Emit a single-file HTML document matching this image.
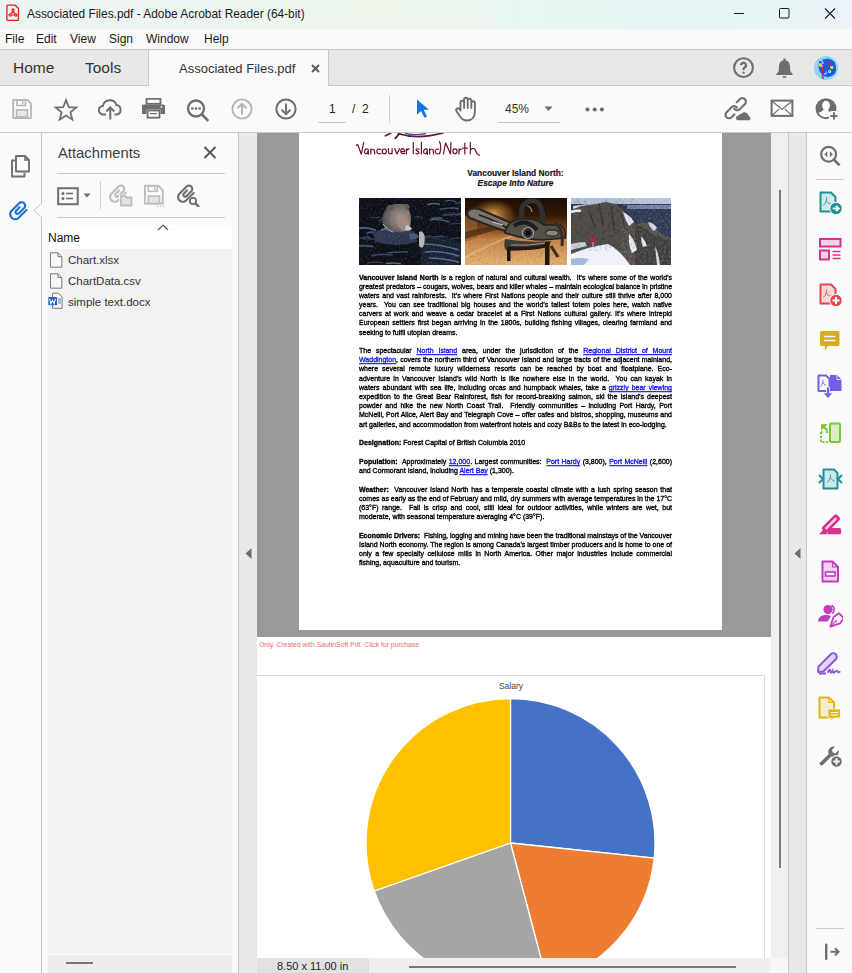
<!DOCTYPE html>
<html><head><meta charset="utf-8">
<style>
*{box-sizing:border-box;margin:0;padding:0}
html,body{width:852px;height:973px;overflow:hidden;background:#fafafa;font-family:"Liberation Sans",sans-serif;color:#222;position:relative}
.a{position:absolute}
#title{left:0;top:0;width:852px;height:29px;background:linear-gradient(90deg,#eaf5f3 0%,#ecf6f0 25%,#eff7ec 45%,#e9f6f1 62%,#e6f4f5 80%,#ebf4f8 100%)}
#menu{left:0;top:29px;width:852px;height:20px;background:#f9f9f9}
#menu span{position:absolute;top:2px;font-size:12px;color:#1a1a1a;line-height:16px}
#tabbar{left:0;top:49px;width:852px;height:37px;background:#e8e8e8;border-top:1px solid #c9c9c9;border-bottom:1px solid #c9c9c9}
#acttab{left:148px;top:49px;width:181px;height:38px;background:#fafafa;border-left:1px solid #c9c9c9;border-right:1px solid #c9c9c9;border-top:1px solid #c9c9c9}
#toolbar{left:0;top:86px;width:852px;height:47px;background:#fafafa;border-bottom:1px solid #c9c9c9}
#lstrip{left:0;top:133px;width:42px;height:840px;background:#fafafa;border-right:1px solid #c6c6c6}
#panel{left:42px;top:133px;width:197px;height:840px;background:#fafafa;border-right:1px solid #c6c6c6}
#lstrip2{left:239px;top:133px;width:18px;height:840px;background:#e9e9e9}
#doc{left:257px;top:133px;width:514px;height:826px;background:#fff;overflow:hidden}
#vscroll{left:771px;top:133px;width:18px;height:840px;background:#f0f0f0;border-right:1px solid #c6c6c6}
#rstrip{left:789px;top:133px;width:18px;height:840px;background:#e9e9e9;border-right:1px solid #c6c6c6}
#rpanel{left:807px;top:133px;width:45px;height:840px;background:#fafafa}
#status{left:257px;top:958px;width:514px;height:15px;background:#efefef}
.ico{position:absolute}
.ln{position:absolute;left:60px;width:313px;height:9px;font-size:7px;line-height:9px;color:#000;-webkit-text-stroke:0.32px #000;transform:scaleY(1.12);transform-origin:0 7px;text-align:justify;text-align-last:justify;white-space:nowrap}
.ln.last{text-align:left;text-align-last:left}
.ln u{color:#1515ee;-webkit-text-stroke-color:#1515ee;text-decoration:underline}
.ln b{font-weight:bold}
</style></head>
<body>
<div id="title" class="a">
<svg class="ico" style="left:6px;top:4px" width="14" height="17" viewBox="0 0 14 17"><path d="M1.7 1.2h7.5l3.3 3.4v10.9a0.8 0.8 0 0 1-0.8 0.8h-10a0.8 0.8 0 0 1-0.8-0.8v-13.5a0.8 0.8 0 0 1 0.8-0.8z" fill="none" stroke="#e3191e" stroke-width="1.3"/><g fill="none" stroke="#e3191e" stroke-width="1.1"><circle cx="7" cy="6" r="1.1"/><circle cx="4.1" cy="11" r="1.1"/><circle cx="9.9" cy="11" r="1.1"/><path d="M7 7.1l-2.1 3M7 7.1l2.1 3M5.2 11h3.6"/></g></svg>
<span class="a" style="left:27px;top:6px;font-size:11.9px;color:#1a1a1a;line-height:16px;white-space:nowrap">Associated Files.pdf - Adobe Acrobat Reader (64-bit)</span>
<svg class="ico" style="left:733px;top:12px" width="12" height="3"><rect x="1" y="1" width="10" height="1" fill="#1a1a1a"/></svg>
<svg class="ico" style="left:778px;top:8px" width="12" height="11"><rect x="1.5" y="0.5" width="9.5" height="9.5" rx="1" fill="none" stroke="#1a1a1a" stroke-width="1"/></svg>
<svg class="ico" style="left:824px;top:8px" width="12" height="11"><path d="M1 0.5l10 10M11 0.5l-10 10" stroke="#1a1a1a" stroke-width="1.1"/></svg>
</div>
<div id="menu" class="a">
<span style="left:5px">File</span><span style="left:36px">Edit</span><span style="left:70px">View</span><span style="left:109px">Sign</span><span style="left:146px">Window</span><span style="left:204px">Help</span>
</div>
<div id="tabbar" class="a">
<span class="a" style="left:13px;top:9px;font-size:15.5px;color:#333;line-height:18px">Home</span>
<span class="a" style="left:85px;top:9px;font-size:15.5px;color:#333;line-height:18px">Tools</span>
<svg class="ico" style="left:731px;top:5px" width="25" height="25" viewBox="731 54 25 25"><circle cx="743.5" cy="66.6" r="9.4" fill="none" stroke="#6e6e6e" stroke-width="2.1"/><path d="M741 64.3a2.5 2.5 0 1 1 3.6 2.2c-0.8 0.4-1.1 0.9-1.1 1.9v0.6" fill="none" stroke="#6e6e6e" stroke-width="2.3"/><circle cx="743.5" cy="71.6" r="1.2" fill="#6e6e6e"/></svg>
<svg class="ico" style="left:774px;top:5px" width="21" height="24" viewBox="774 54 21 24"><rect x="783.3" y="57.6" width="2.4" height="2" rx="0.5" fill="#6e6e6e"/><path d="M784.5 59.2c-3.5 0-5.4 2.6-5.5 6.2l-0.3 4.6l-2.4 3.3v0.6h16.4v-0.6l-2.4-3.3l-0.3-4.6c-0.1-3.6-2-6.2-5.5-6.2z" fill="#6e6e6e"/><path d="M782.3 75.2h4.4a2.2 1.8 0 0 1-4.4 0z" fill="#6e6e6e"/></svg>
<svg class="ico" style="left:813px;top:5px" width="26" height="26" viewBox="813 54 26 26"><circle cx="826" cy="67" r="12" fill="#8dd6fa"/>
<path d="M819 60.5l2-0.8l1.8 4l1-1.5l-1.5-3.5l5.5-1.2l4 1.2l3 2.5l1 4l0.4 4l-1.5 3.5l-3 2.2l-4 1l-3.5-0.6l-2.6-2l-2-3l-1-3.5z" fill="#1d58e6"/>
<path d="M818.8 62.5l2.5-0.5l1 3l-3.2 0.6z" fill="#f6df0c"/>
<path d="M820.5 66l2-0.5l1 5.5l-2.3 0.5z" fill="#f21c14"/>
<path d="M820.5 65.5l2-0.3l0.2 0.8l-2 0.3z" fill="#fff"/>
<path d="M821.5 74.5l1.3-0.5l1.3 3.6l-1.3 0.6z" fill="#f21c14"/>
<path d="M828.2 60l1.4 0l0.6 4l-2.2 0z" fill="#f21c14"/>
<path d="M830.3 65l3.2 0.2l-0.5 2.8l-2.6-0.2z" fill="#f6df0c"/>
<path d="M824 72.5a1.4 1.4 0 0 0 2.2-1.8" fill="none" stroke="#fff" stroke-width="0.9"/>
<circle cx="829.6" cy="70.5" r="1.5" fill="#fff"/><circle cx="829.4" cy="70.3" r="0.6" fill="#1d58e6"/>
</svg>
</div>
<div id="acttab" class="a">
<span class="a" style="left:30px;top:11px;font-size:13px;color:#333;line-height:16px;white-space:nowrap">Associated Files.pdf</span>
<svg class="ico" style="left:162px;top:14px" width="9" height="9"><path d="M1 1l7 7M8 1l-7 7" stroke="#555" stroke-width="1.8"/></svg>
</div>
<div id="toolbar" class="a">
<!-- save disabled -->
<svg class="ico" style="left:11px;top:12px" width="22" height="22" viewBox="0 0 22 22"><path d="M2.2 1.8h14.3l3.5 3.5v14.2a0.7 0.7 0 0 1-0.7 0.7h-16.4a0.7 0.7 0 0 1-0.7-0.7v-17z" fill="none" stroke="#b5b5b5" stroke-width="1.8"/><rect x="6" y="2" width="8.5" height="5.5" fill="none" stroke="#b5b5b5" stroke-width="1.6"/><rect x="11" y="3.2" width="1.5" height="3" fill="#b5b5b5"/><rect x="5.5" y="12" width="11" height="7" fill="#e6e6e6" stroke="#b5b5b5" stroke-width="1.6"/></svg>
<!-- star -->
<svg class="ico" style="left:53px;top:11px" width="26" height="25" viewBox="0 0 26 25"><g transform="translate(13 13) scale(0.92) translate(-13 -13)"><path d="M13 2.2l3 7.6l8.2 0.5l-6.4 5.2l2.1 8l-6.9-4.4l-6.9 4.4l2.1-8l-6.4-5.2l8.2-0.5z" fill="none" stroke="#6e6e6e" stroke-width="1.9" stroke-linejoin="miter"/></g></svg>
<!-- cloud upload -->
<svg class="ico" style="left:98px;top:11px" width="25" height="24" viewBox="0 0 25 24"><path d="M8 17.5h-2.5a4.3 4.3 0 0 1-0.6-8.6a7 7 0 0 1 13.5-0.8a4.8 4.8 0 0 1 0.6 9.4h-2.5" fill="none" stroke="#6e6e6e" stroke-width="2"/><path d="M12.3 22.5v-11.5M8.3 14.5l4-4l4 4" fill="none" stroke="#6e6e6e" stroke-width="2"/></svg>
<!-- printer -->
<svg class="ico" style="left:141px;top:12px" width="25" height="21" viewBox="0 0 25 21"><rect x="5.5" y="0.8" width="14" height="5" fill="none" stroke="#6e6e6e" stroke-width="1.8"/><path d="M2.5 6.5h20a1.5 1.5 0 0 1 1.5 1.5v8h-4.5v-4.5h-14v4.5h-4.5v-8a1.5 1.5 0 0 1 1.5-1.5z" fill="#6e6e6e"/><rect x="6.5" y="12.5" width="12" height="7.2" fill="none" stroke="#6e6e6e" stroke-width="1.8"/><rect x="9" y="15" width="7" height="1.2" fill="#6e6e6e"/><circle cx="20.5" cy="9" r="0.9" fill="#fafafa"/></svg>
<!-- search dots -->
<svg class="ico" style="left:186px;top:13px" width="25" height="23" viewBox="0 0 25 23"><circle cx="10" cy="9.5" r="8" fill="none" stroke="#6e6e6e" stroke-width="2.3"/><path d="M15.8 15.3l6.5 6.5" stroke="#6e6e6e" stroke-width="2.6"/><circle cx="6.4" cy="9.5" r="1.3" fill="#6e6e6e"/><circle cx="10" cy="9.5" r="1.3" fill="#6e6e6e"/><circle cx="13.6" cy="9.5" r="1.3" fill="#6e6e6e"/></svg>
<!-- up disabled -->
<svg class="ico" style="left:230px;top:12px" width="24" height="22" viewBox="0 0 24 22"><circle cx="12" cy="11" r="9.6" fill="none" stroke="#b5b5b5" stroke-width="1.9"/><path d="M12 16.5v-10.5M7.5 10.3l4.5-4.5l4.5 4.5" fill="none" stroke="#b5b5b5" stroke-width="2"/></svg>
<!-- down -->
<svg class="ico" style="left:274px;top:12px" width="24" height="22" viewBox="0 0 24 22"><circle cx="12" cy="11" r="9.6" fill="none" stroke="#6e6e6e" stroke-width="2"/><path d="M12 5.5v10.5M7.5 11.7l4.5 4.5l4.5-4.5" fill="none" stroke="#6e6e6e" stroke-width="2"/></svg>
<span class="a" style="left:329px;top:16.3px;font-size:12px;line-height:14px;color:#222">1</span>
<div class="a" style="left:318px;top:36px;width:28px;height:1px;background:#c4c4c4"></div>
<span class="a" style="left:352px;top:16.3px;font-size:12px;line-height:14px;color:#222">/&nbsp; 2</span>
<div class="a" style="left:389px;top:9px;width:1px;height:28px;background:#cdcdcd"></div>
<!-- arrow cursor -->
<svg class="ico" style="left:415px;top:12px" width="16" height="21" viewBox="0 0 16 21"><path d="M2 1.5l12 10.3h-5.3l3.3 6.6l-2.6 1.3l-3.3-6.8l-4.1 3.8z" fill="#1473e6"/></svg>
<!-- hand -->
<svg class="ico" style="left:453px;top:10px" width="27" height="26" viewBox="0 0 27 26"><path d="M7.5 14.5v-8a1.8 1.8 0 0 1 3.6 0v5.5v-8.5a1.8 1.8 0 0 1 3.6 0v8.5v-7.5a1.8 1.8 0 0 1 3.6 0v7.5v-5a1.8 1.8 0 0 1 3.6 0v8.5c0 5.5-3.2 9-8 9c-3.5 0-5.3-1.6-7-4.3l-3.3-5a1.7 1.7 0 0 1 2.6-2.2z" fill="none" stroke="#6e6e6e" stroke-width="1.9" stroke-linejoin="round"/></svg>
<span class="a" style="left:505px;top:16.2px;font-size:12px;line-height:14px;color:#333">45%</span>
<svg class="ico" style="left:544px;top:20px" width="10" height="6"><path d="M0.5 0.5h8l-4 4.5z" fill="#6e6e6e"/></svg>
<div class="a" style="left:498px;top:36px;width:62px;height:1px;background:#c4c4c4"></div>
<svg class="ico" style="left:585px;top:20.5px" width="20" height="5"><circle cx="2.5" cy="2.5" r="2.1" fill="#6e6e6e"/><circle cx="9.7" cy="2.5" r="2.1" fill="#6e6e6e"/><circle cx="16.9" cy="2.5" r="2.1" fill="#6e6e6e"/></svg>
<!-- link cloud -->
<svg class="ico" style="left:722px;top:8px" width="32" height="30" viewBox="722 94 32 30"><path d="M736.69 102.36 L736.90 102.15 L737.11 101.94 L737.33 101.73 L737.54 101.51 L737.75 101.30 L737.96 101.09 L738.17 100.88 L738.39 100.66 L738.60 100.45 L738.81 100.24 L739.02 100.03 L739.23 99.82 L739.45 99.60 L739.66 99.39 L739.87 99.18 L740.21 98.88 L740.60 98.62 L741.01 98.42 L741.44 98.27 L741.89 98.18 L742.35 98.15 L742.80 98.18 L743.25 98.27 L743.68 98.42 L744.10 98.62 L744.48 98.88 L744.82 99.18 L745.12 99.52 L745.38 99.90 L745.58 100.32 L745.73 100.75 L745.82 101.20 L745.85 101.65 L745.82 102.11 L745.73 102.56 L745.58 102.99 L745.38 103.40 L745.12 103.79 L744.82 104.13 L744.61 104.34 L744.40 104.55 L744.18 104.77 L743.97 104.98 L743.76 105.19 L743.55 105.40 L743.34 105.61 L743.12 105.83 L742.91 106.04 L742.70 106.25 L742.49 106.46 L742.27 106.67 L742.06 106.89 L741.85 107.10 L741.64 107.31 L741.43 107.52 L741.21 107.74 L741.00 107.95 L740.79 108.16 L740.58 108.37 L740.37 108.58 L740.15 108.80 L739.94 109.01 L739.73 109.22 L739.39 109.52 L739.00 109.78 L738.59 109.98 L738.16 110.13 L737.71 110.22 L737.25 110.25 L736.80 110.22 L736.35 110.13 L735.92 109.98 L735.50 109.78 L735.12 109.52 L734.78 109.22 L734.48 108.88 L734.22 108.50" fill="none" stroke="#6e6e6e" stroke-width="2.1" stroke-linecap="round"/><path d="M734.50 114.25 L734.29 114.46 L734.07 114.67 L733.86 114.89 L733.65 115.10 L733.44 115.31 L733.23 115.52 L733.01 115.74 L732.80 115.95 L732.59 116.16 L732.38 116.37 L732.17 116.58 L731.95 116.80 L731.74 117.01 L731.53 117.22 L731.19 117.52 L730.80 117.78 L730.39 117.98 L729.96 118.13 L729.51 118.22 L729.05 118.25 L728.60 118.22 L728.15 118.13 L727.72 117.98 L727.30 117.78 L726.92 117.52 L726.58 117.22 L726.28 116.88 L726.02 116.50 L725.82 116.08 L725.67 115.65 L725.58 115.20 L725.55 114.75 L725.58 114.29 L725.67 113.84 L725.82 113.41 L726.02 113.00 L726.28 112.61 L726.58 112.27 L726.58 112.27 L726.79 112.06 L727.00 111.85 L727.22 111.63 L727.43 111.42 L727.64 111.21 L727.85 111.00 L728.06 110.79 L728.28 110.57 L728.49 110.36 L728.70 110.15 L728.91 109.94 L729.13 109.73 L729.34 109.51 L729.55 109.30 L729.76 109.09 L729.97 108.88 L730.19 108.66 L730.40 108.45 L730.61 108.24 L730.82 108.03 L731.03 107.82 L731.25 107.60 L731.46 107.39 L731.67 107.18 L732.01 106.88 L732.40 106.62 L732.81 106.42 L733.24 106.27 L733.69 106.18 L734.15 106.15 L734.60 106.18 L735.05 106.27 L735.48 106.42 L735.90 106.62 L736.28 106.88 L736.62 107.18 L736.92 107.52" fill="none" stroke="#6e6e6e" stroke-width="2.1" stroke-linecap="round"/><path d="M736 121.2v-6h14.8v6z" fill="#fafafa"/><path d="M737.2 120.2a2.6 2.6 0 0 1 1.3-4.8a3 3 0 0 1 2.6-1.3a4.2 4.2 0 0 1 7.6 1.8a2.7 2.7 0 0 1 1 4.3z" fill="#6e6e6e"/></svg>
<!-- mail -->
<svg class="ico" style="left:770px;top:13px" width="24" height="19" viewBox="0 0 24 19"><rect x="1.6" y="1.6" width="20.8" height="15.3" fill="none" stroke="#6e6e6e" stroke-width="2"/><path d="M2 2.2l10 8l10-8M2 16.5l7.3-6.6M22 16.5l-7.3-6.6" fill="none" stroke="#6e6e6e" stroke-width="1.2"/></svg>
<!-- person add -->
<svg class="ico" style="left:812px;top:8px" width="30" height="30" viewBox="812 94 30 30"><defs><clipPath id="pin"><circle cx="826" cy="108.7" r="8.6"/></clipPath></defs><circle cx="826" cy="108.7" r="10.5" fill="#6e6e6e"/><g clip-path="url(#pin)" fill="#fafafa"><ellipse cx="826" cy="105.6" rx="3.9" ry="4.8"/><path d="M823.8 109.5h4.4l0.6 2.2c3 0.8 5.5 2.2 7 4.5l-2 8h-18l-1.5-8c1.6-2.3 4.1-3.7 7-4.5z"/></g><rect x="829" y="111" width="10" height="10" rx="3" fill="#fafafa"/><path d="M834 112.3v7.3M830.3 116h7.3" stroke="#6e6e6e" stroke-width="1.9"/></svg>
</div>
<div id="lstrip" class="a">
<svg class="ico" style="left:10px;top:21px" width="22" height="24" viewBox="0 0 22 24"><path d="M6 2h9l4 4v11.5h-13z" fill="none" stroke="#6e6e6e" stroke-width="1.9" stroke-linejoin="round"/><path d="M15 2v4h4" fill="none" stroke="#6e6e6e" stroke-width="1.6"/><path d="M5 6.5h-3v16h12.5v-4" fill="none" stroke="#6e6e6e" stroke-width="1.9" stroke-linejoin="round"/></svg>
<svg class="ico" style="left:6px;top:65px" width="26" height="26" viewBox="6 198 26 26"><path d="M19.52 207.32 L16.19 210.65 L15.93 210.98 L15.74 211.36 L15.65 211.78 L15.65 212.20 L15.74 212.62 L15.93 213.00 L16.19 213.33 L16.53 213.60 L16.91 213.78 L17.32 213.88 L17.75 213.88 L18.16 213.78 L18.55 213.60 L18.88 213.33 L24.08 208.14 L24.57 207.52 L24.91 206.82 L25.08 206.05 L25.08 205.27 L24.91 204.51 L24.57 203.80 L24.08 203.19 L23.46 202.70 L22.76 202.36 L21.99 202.18 L21.21 202.18 L20.45 202.36 L19.74 202.70 L19.13 203.19 L11.67 210.65 L10.97 211.52 L10.48 212.53 L10.23 213.62 L10.23 214.74 L10.48 215.83 L10.97 216.84 L11.67 217.72 L12.54 218.42 L13.55 218.90 L14.64 219.15 L15.76 219.15 L16.85 218.90 L17.86 218.42 L18.74 217.72 L26.59 209.87" fill="none" stroke="#1b6fd6" stroke-width="2.1" stroke-linecap="round" stroke-linejoin="round"/></svg>
</div>
<div class="a" style="left:33px;top:203px;width:10px;height:15px"><svg width="10" height="15"><path d="M9 0l-8 7.3l8 7.3" fill="#fafafa" stroke="#c6c6c6" stroke-width="1"/><rect x="9" y="0" width="1" height="15" fill="#fafafa"/></svg></div>
<div id="panel" class="a">
<span class="a" style="left:16px;top:11px;font-size:14.8px;line-height:18px;color:#3d3d3d;white-space:nowrap">Attachments</span>
<svg class="ico" style="left:161px;top:13px" width="14" height="13"><path d="M1.5 1l11 11M12.5 1l-11 11" stroke="#555" stroke-width="2"/></svg>
<div class="a" style="left:15px;top:40px;width:168px;height:1px;background:#c9c9c9"></div>
<svg class="ico" style="left:15px;top:54px" width="22" height="19" viewBox="0 0 22 19"><rect x="1.2" y="1.2" width="19.5" height="16" fill="none" stroke="#6e6e6e" stroke-width="2"/><circle cx="6" cy="6.5" r="1.5" fill="#6e6e6e"/><circle cx="6" cy="11.5" r="1.5" fill="#6e6e6e"/><rect x="9" y="5.7" width="7" height="1.6" fill="#6e6e6e"/><rect x="9" y="10.7" width="7" height="1.6" fill="#6e6e6e"/></svg>
<svg class="ico" style="left:41px;top:60px" width="8" height="5"><path d="M0.5 0.5h7l-3.5 4z" fill="#6e6e6e"/></svg>
<div class="a" style="left:58px;top:48px;width:1px;height:28px;background:#d0d0d0"></div>
<svg class="ico" style="left:65px;top:50px" width="26" height="24" viewBox="107 183 26 24"><path d="M118.97 190.48 L115.81 193.64 L115.56 193.96 L115.38 194.32 L115.29 194.71 L115.29 195.12 L115.38 195.51 L115.56 195.88 L115.81 196.19 L116.12 196.44 L116.49 196.62 L116.88 196.71 L117.29 196.71 L117.68 196.62 L118.04 196.44 L118.36 196.19 L123.30 191.26 L123.76 190.67 L124.09 190.00 L124.25 189.28 L124.25 188.53 L124.09 187.81 L123.76 187.13 L123.30 186.55 L122.72 186.09 L122.05 185.77 L121.32 185.60 L120.57 185.60 L119.85 185.77 L119.18 186.09 L118.60 186.55 L111.51 193.64 L110.85 194.47 L110.38 195.43 L110.15 196.47 L110.15 197.53 L110.38 198.57 L110.85 199.53 L111.51 200.36 L112.34 201.02 L113.30 201.48 L114.34 201.72 L115.40 201.72 L116.44 201.48 L117.39 201.02 L118.23 200.36 L125.68 192.90" fill="none" stroke="#bdbdbd" stroke-width="2.1" stroke-linecap="round" stroke-linejoin="round"/><rect x="119" y="194.5" width="14" height="12" fill="#fafafa"/><path d="M121 197.5v-1.8h4l1.2 1.8h5.3v8h-10.5z" fill="#e3e3e3" stroke="#bdbdbd" stroke-width="1.8" stroke-linejoin="round"/></svg>
<svg class="ico" style="left:100px;top:49px" width="26" height="26" viewBox="142 182 26 26"><path d="M145 185.8h13.3l4.5 4.5v13.2h-17.8z" fill="none" stroke="#bdbdbd" stroke-width="1.9"/><rect x="148.3" y="185.8" width="9" height="5.5" fill="none" stroke="#bdbdbd" stroke-width="1.6"/><rect x="154" y="187.3" width="1.6" height="2.6" fill="#bdbdbd"/><rect x="148.3" y="196" width="11.2" height="7.5" fill="#e3e3e3" stroke="#bdbdbd" stroke-width="1.6"/><circle cx="157.8" cy="206.3" r="0.8" fill="#bdbdbd"/><circle cx="160.8" cy="206.3" r="0.8" fill="#bdbdbd"/><circle cx="163.8" cy="206.3" r="0.8" fill="#bdbdbd"/></svg>
<svg class="ico" style="left:133px;top:50px" width="26" height="24" viewBox="175 183 26 24"><path d="M186.97 190.48 L183.81 193.64 L183.56 193.96 L183.38 194.32 L183.29 194.71 L183.29 195.12 L183.38 195.51 L183.56 195.88 L183.81 196.19 L184.12 196.44 L184.49 196.62 L184.88 196.71 L185.29 196.71 L185.68 196.62 L186.04 196.44 L186.36 196.19 L191.30 191.26 L191.76 190.67 L192.09 190.00 L192.25 189.28 L192.25 188.53 L192.09 187.81 L191.76 187.13 L191.30 186.55 L190.72 186.09 L190.05 185.77 L189.32 185.60 L188.57 185.60 L187.85 185.77 L187.18 186.09 L186.60 186.55 L179.51 193.64 L178.85 194.47 L178.38 195.43 L178.15 196.47 L178.15 197.53 L178.38 198.57 L178.85 199.53 L179.51 200.36 L180.34 201.02 L181.30 201.48 L182.34 201.72 L183.40 201.72 L184.44 201.48 L185.39 201.02 L186.23 200.36 L193.68 192.90" fill="none" stroke="#6e6e6e" stroke-width="2.1" stroke-linecap="round" stroke-linejoin="round"/><circle cx="193" cy="201" r="4.6" fill="#fafafa"/><circle cx="193" cy="201" r="3.2" fill="none" stroke="#6e6e6e" stroke-width="1.8"/><path d="M195.4 203.4l3 3" stroke="#6e6e6e" stroke-width="2.2" stroke-linecap="round"/></svg>
<div class="a" style="left:15px;top:84px;width:168px;height:1px;background:#c9c9c9"></div>
<div class="a" style="left:6px;top:92px;width:184px;height:24px;background:#fff"></div>
<svg class="ico" style="left:115px;top:91px" width="12" height="7"><path d="M1 6l5-5l5 5" fill="none" stroke="#555" stroke-width="1.2"/></svg>
<span class="a" style="left:6px;top:97.5px;font-size:12px;line-height:14px;color:#111">Name</span>
<div class="a" style="left:6px;top:116px;width:184px;height:724px;background:#f2f2f2"></div>
<div class="a" style="left:190px;top:92px;width:6px;height:748px;background:#fafafa"></div>
<div class="a" style="left:6px;top:116px;width:14px;height:41px;background:#f6f6f6"></div>
<svg class="ico" style="left:7px;top:119px" width="14" height="16" viewBox="0 0 14 16"><path d="M1.5 0.8h7.5l3.8 3.8v10.6h-11.3z" fill="#f7f7f7" stroke="#7a7a7a" stroke-width="1"/><path d="M9 0.8v3.8h3.8" fill="none" stroke="#7a7a7a" stroke-width="1"/></svg>
<span class="a" style="left:26px;top:120px;font-size:11.5px;line-height:14px;color:#333">Chart.xlsx</span>
<svg class="ico" style="left:7px;top:140px" width="14" height="16" viewBox="0 0 14 16"><path d="M1.5 0.8h7.5l3.8 3.8v10.6h-11.3z" fill="#f7f7f7" stroke="#7a7a7a" stroke-width="1"/><path d="M9 0.8v3.8h3.8" fill="none" stroke="#7a7a7a" stroke-width="1"/></svg>
<span class="a" style="left:26px;top:141px;font-size:11.5px;line-height:14px;color:#333">ChartData.csv</span>
<svg class="ico" style="left:6px;top:159px" width="17" height="18" viewBox="0 0 17 18"><path d="M4.5 1.2h5.8l3.8 3.8v11.3h-9.6z" fill="#f7f7f7" stroke="#7a7a7a" stroke-width="1"/><rect x="10.2" y="6.5" width="2.6" height="1" fill="#2b7cd3"/><rect x="10.2" y="8.5" width="2.6" height="1" fill="#2b7cd3"/><rect x="10.2" y="10.5" width="2.6" height="1" fill="#2b7cd3"/><rect x="0.3" y="5" width="8.8" height="8.3" rx="0.8" fill="#2065c7"/><path d="M1.6 6.8l1.3 4.8l1.6-3.6l1.6 3.6l1.3-4.8" fill="none" stroke="#fff" stroke-width="1.1"/></svg>
<span class="a" style="left:26px;top:162px;font-size:11.5px;line-height:14px;color:#333">simple text.docx</span>
<div class="a" style="left:6px;top:821px;width:184px;height:19px;background:#ededed;border-top:1px solid #fafafa"></div>
<div class="a" style="left:24px;top:829px;width:27px;height:2px;background:#777"></div>
</div>
<div id="lstrip2" class="a"><svg class="ico" style="left:6px;top:415px" width="7" height="11"><path d="M6.5 0v11l-6-5.5z" fill="#6e6e6e"/></svg></div>
<div id="doc" class="a">
  <div class="a" style="left:0;top:0;width:514px;height:504px;background:#999"></div>
  <div id="pg" class="a" style="left:42px;top:0;width:423px;height:497px;background:#fff;overflow:hidden">
<svg class="a" style="left:50px;top:0px" width="140" height="30" viewBox="349 133 140 30">
<g fill="none" stroke="#6a1626" stroke-width="1.2" stroke-linecap="round" stroke-linejoin="round">
<path d="M385.5 135.8L390.5 133.3" stroke-width="1.7"/><path d="M395.5 138.2L399.5 133.5" stroke-width="1.9"/><path d="M398.5 133.8Q418 139.8 443 133" stroke-width="1.7"/>
<path d="M356.5 145.5q0.8-1.5 1.5-0.3l3.3 9l2.4-11.5"/>
<path d="M368.3 149.3q-3-1.3-3.8 2q-0.2 3 2.6 2.2l1.2-3.2v4"/>
<path d="M370.8 148.8v5.2M370.8 150.5q2-2.2 3.6-0.5l0.3 4"/>
<path d="M380.8 149.4q-3.8-1.3-4 2q0 3 4 2.2"/>
<ellipse cx="384.3" cy="151.4" rx="2.1" ry="2.4"/>
<path d="M388.5 148.6v3.6q0.8 2.4 3.6 0.9v-4.6v5.2"/>
<path d="M394.6 148.5l2.4 5.5l2.6-5.5"/>
<path d="M401 151.6h3.6q0-3-2-3q-2 0-1.8 3q0.2 2.5 3.8 1.8"/>
<path d="M406.4 148.8v5.2M406.4 151q1-2.4 3-2"/>
<path d="M413.3 142.5v11.3"/>
<path d="M419 149.2q-3-1.2-3 0.9q3 1.3 3 3q-1 1.2-3.2 0.2"/>
<path d="M421.4 142v12"/>
<path d="M427.4 149.3q-3-1.3-3.8 2q-0.2 3 2.6 2.2l1.2-3.2v4"/>
<path d="M429.6 148.8v5.2M429.6 150.5q2-2.2 3.6-0.5l0.3 4"/>
<path d="M438.8 149.3q-3-1-3.6 2q0 3 3 2.3M439.5 141.5q2.5 6 0 12.5"/>
<path d="M443.5 154q1-6 2.2-11l4.8 11q0.4-6 0.4-11.3"/>
<ellipse cx="455" cy="151.3" rx="2.1" ry="2.4"/>
<path d="M459 148.8v5.2M459 151q1-2.2 3-2"/>
<path d="M464.8 143v11M462.8 148.2h4.6"/>
<path d="M470.3 142.3v11.7M470.3 150q3-3 5-0.3q1 3 1.8 4l2.2 1.6"/>
</g>
<path d="M405 133.4Q415 135.6 426 133.6" fill="none" stroke="#2a4a9a" stroke-width="1.3"/>
</svg>
  <div class="a" style="left:60px;top:34.5px;width:313px;text-align:center;font-size:8.4px;line-height:10.8px;font-weight:bold;color:#111;-webkit-text-stroke:0.15px #111">Vancouver Island North:<br><i>Escape Into Nature</i></div>
<svg class="a" style="left:60px;top:65px" width="102" height="67" viewBox="0 0 102 67">
<defs><filter id="bl1" x="-10%" y="-10%" width="120%" height="120%"><feGaussianBlur stdDeviation="0.6"/></filter>
<radialGradient id="bear" cx="0.65" cy="0.5" r="0.7"><stop offset="0" stop-color="#a89488"/><stop offset="0.45" stop-color="#7e7670"/><stop offset="1" stop-color="#3e4048"/></radialGradient>
<clipPath id="c1"><rect width="102" height="67"/></clipPath></defs>
<rect width="102" height="67" fill="#0e1018"/>
<g filter="url(#bl1)" clip-path="url(#c1)">
<path d="M20.0 36.5q6.6 -2.3 13.2 -0.8" stroke="#2a3450" stroke-width="0.8" fill="none"/>
<path d="M82.9 17.4q5.6 -2.1 11.3 0.6" stroke="#2a3450" stroke-width="1.2" fill="none"/>
<path d="M85.4 15.5q5.1 -2.5 10.1 1.0" stroke="#2a3450" stroke-width="0.9" fill="none"/>
<path d="M74.6 39.6q6.1 -2.6 12.2 -0.2" stroke="#34405e" stroke-width="1.4" fill="none"/>
<path d="M91.6 26.0q9.5 -1.8 19.0 1.4" stroke="#2a3450" stroke-width="1.2" fill="none"/>
<path d="M93.2 58.9q4.7 -2.0 9.4 -0.2" stroke="#44527a" stroke-width="1.5" fill="none"/>
<path d="M76.8 57.3q6.9 -2.1 13.9 0.6" stroke="#2a3450" stroke-width="1.2" fill="none"/>
<path d="M19.4 22.6q10.4 -2.7 20.8 2.0" stroke="#34405e" stroke-width="1.5" fill="none"/>
<path d="M12.1 57.7q10.8 -2.4 21.5 -0.4" stroke="#34405e" stroke-width="1.6" fill="none"/>
<path d="M55.2 19.1q4.4 -1.2 8.9 1.4" stroke="#2a3450" stroke-width="1.2" fill="none"/>
<path d="M10.8 19.7q9.4 -1.1 18.8 0.8" stroke="#34405e" stroke-width="0.8" fill="none"/>
<path d="M70.4 22.2q10.2 -2.0 20.3 2.0" stroke="#56668e" stroke-width="1.1" fill="none"/>
<path d="M3.1 40.2q4.2 -2.9 8.4 -0.1" stroke="#44527a" stroke-width="1.1" fill="none"/>
<path d="M67.4 65.7q6.4 -2.9 12.8 1.7" stroke="#56668e" stroke-width="1.2" fill="none"/>
<path d="M62.6 39.9q7.9 -1.9 15.8 1.2" stroke="#56668e" stroke-width="1.0" fill="none"/>
<path d="M26.6 65.5q7.6 -1.0 15.3 0.2" stroke="#56668e" stroke-width="1.4" fill="none"/>
<path d="M-2.9 41.3q8.4 -2.3 16.9 -0.0" stroke="#34405e" stroke-width="1.2" fill="none"/>
<path d="M91.3 40.8q6.0 -1.0 11.9 -0.8" stroke="#2a3450" stroke-width="1.5" fill="none"/>
<path d="M96.1 16.8q7.2 -1.4 14.4 -0.4" stroke="#56668e" stroke-width="1.6" fill="none"/>
<path d="M83.6 17.7q9.5 -2.5 19.0 -0.9" stroke="#34405e" stroke-width="1.4" fill="none"/>
<path d="M72.2 20.8q5.6 -1.5 11.1 -0.4" stroke="#56668e" stroke-width="1.2" fill="none"/>
<path d="M68.3 6.8q6.3 -2.3 12.5 -0.3" stroke="#56668e" stroke-width="1.6" fill="none"/>
<path d="M95.9 5.4q9.2 -2.8 18.4 0.4" stroke="#44527a" stroke-width="1.0" fill="none"/>
<path d="M7.7 35.5q5.3 -2.7 10.7 0.0" stroke="#44527a" stroke-width="1.6" fill="none"/>
<path d="M4.0 41.5q8.1 -1.6 16.3 1.4" stroke="#2a3450" stroke-width="1.1" fill="none"/>
<path d="M91.7 10.5q4.0 -2.1 8.1 2.0" stroke="#2a3450" stroke-width="1.5" fill="none"/>
<path d="M-1.6 30.6q9.3 -2.1 18.5 1.7" stroke="#56668e" stroke-width="1.7" fill="none"/>
<path d="M85.1 65.1q4.8 -1.1 9.7 1.7" stroke="#44527a" stroke-width="1.5" fill="none"/>
<path d="M92.0 60.1q10.3 -1.0 20.6 1.2" stroke="#34405e" stroke-width="1.0" fill="none"/>
<path d="M26.5 44.4q7.7 -1.1 15.3 1.7" stroke="#2a3450" stroke-width="0.9" fill="none"/>
<path d="M8.2 65.1q7.8 -1.7 15.6 -0.4" stroke="#34405e" stroke-width="1.3" fill="none"/>
<path d="M80.8 11.5q9.5 -2.6 19.1 -1.0" stroke="#44527a" stroke-width="1.4" fill="none"/>
<path d="M85.6 3.3q5.9 -2.2 11.8 0.6" stroke="#56668e" stroke-width="0.9" fill="none"/>
<path d="M28.9 54.9q10.0 -1.1 20.0 -0.9" stroke="#44527a" stroke-width="1.3" fill="none"/>
<path d="M-1.5 47.8q7.6 -1.6 15.2 -0.1" stroke="#2a3450" stroke-width="1.2" fill="none"/>
<path d="M62.9 39.3q6.5 -3.0 13.1 0.3" stroke="#44527a" stroke-width="0.9" fill="none"/>
<path d="M-4.6 48.4q9.6 -1.1 19.1 0.4" stroke="#44527a" stroke-width="1.5" fill="none"/>
<path d="M62 40q20-4 40 4v23h-40z" fill="#1c2438" opacity="0.8"/>
<path d="M64 46q16 0 36 6M66 54q14-2 34 4M70 60q12 0 30 4" stroke="#5a6a94" stroke-width="1.4" fill="none"/>
<path d="M14 34q20-8 42 0l2 10q-20 6-42 0z" fill="#2e3850"/>
<path d="M22 32q10-4 18-2" stroke="#6a7aa0" stroke-width="1.5" fill="none"/>
<path d="M23 24q0-15 13-18l10 0q6 6 6 16q0 10-8 12q-16 2-21-10z" fill="url(#bear)"/>
<path d="M27 11q1-5 6-4l1 5zM46 6q4-1 5 4l-4 2z" fill="#5e524c"/>
<path d="M41 16q7 2 10 9q0 7-6 8q-6-2-7-10z" fill="#a08a80"/>
<path d="M47 27q5 1 6 4q-3 3-7 1z" fill="#cfc6c0"/>
<path d="M24 26q4 6 10 8" stroke="#a8a4a4" stroke-width="1.2" fill="none"/>
<path d="M60 34q3-2 5 2q2 6-1 13q-3 2-4-2z" fill="#bcb4ae"/>
<path d="M50 36q7-2 10 2q-2 4-9 3z" fill="#4c5a7a"/>
</g><filter id="nz1"><feTurbulence type="fractalNoise" baseFrequency="0.5" numOctaves="2" seed="11"/><feColorMatrix type="matrix" values="0 0 0 0 0.45  0 0 0 0 0.52  0 0 0 0 0.7  0 0 0 -3 1.5"/></filter>
<rect width="102" height="67" filter="url(#nz1)" opacity="0.18"/></svg>
<svg class="a" style="left:166px;top:65px" width="102" height="67" viewBox="0 0 102 67">
<defs><filter id="bl2" x="-10%" y="-10%" width="120%" height="120%"><feGaussianBlur stdDeviation="0.5"/></filter>
<linearGradient id="tg" x1="0" y1="0" x2="0" y2="1"><stop offset="0" stop-color="#1a0c04"/><stop offset="0.25" stop-color="#2e1606"/><stop offset="0.45" stop-color="#7a4416"/><stop offset="0.62" stop-color="#c8864a"/><stop offset="1" stop-color="#e4b27a"/></linearGradient>
<radialGradient id="glow" cx="0.28" cy="0.24" r="0.22"><stop offset="0" stop-color="#e8a850" stop-opacity="0.95"/><stop offset="1" stop-color="#d89040" stop-opacity="0"/></radialGradient>
<clipPath id="c2"><rect width="102" height="67"/></clipPath>
<filter id="nz2"><feTurbulence type="fractalNoise" baseFrequency="0.45" numOctaves="2" seed="5"/><feColorMatrix type="matrix" values="0 0 0 0 0.1  0 0 0 0 0.05  0 0 0 0 0  0 0 0 -2.5 1.3"/></filter></defs>
<rect width="102" height="67" fill="url(#tg)"/>
<rect width="102" height="67" fill="url(#glow)"/>
<g filter="url(#bl2)" clip-path="url(#c2)">
<path d="M0 18h12v22l-12 4z" fill="#9a6030" opacity="0.7"/>
<path d="M0 34l34-8v5l-34 10z" fill="#3a200c" opacity="0.6"/>
<path d="M0 60q30-18 66-28" stroke="#f0c890" stroke-width="2" fill="none" opacity="0.55"/>
<path d="M3 13q4-4 11-2l30 13q6 4 4 8l-4 2q-12-3-39-14q-4-2-2-7z" fill="#7c7672" stroke="#2a2626" stroke-width="2.2"/>
<path d="M14 17q16 5 28 13" stroke="#1e1e1e" stroke-width="1.6" fill="none"/>
<path d="M28 24l10 3" stroke="#e0d8d0" stroke-width="1.3"/>
<path d="M58 25q-5-19 7-22q10-2 12 11q2 8 0 16" stroke="#2e3036" stroke-width="5" fill="none"/>
<path d="M62 8q4 0 5 6" stroke="#9a9490" stroke-width="1.2" fill="none"/>
<path d="M40 35q2-12 15-14q15-2 24 6l16 0q7 4 5 13l-22 2q-15 0-38-7z" fill="#55514c" stroke="#222" stroke-width="1.6"/>
<path d="M49 28q12-9 23 4" stroke="#1c1c22" stroke-width="4" fill="none"/>
<circle cx="63" cy="35" r="5.5" fill="#2e2e34" stroke="#b0aaa4" stroke-width="1.2"/><circle cx="63" cy="35" r="2.4" fill="#0a0a0a"/>
<ellipse cx="87" cy="35" rx="6.5" ry="3.2" fill="#8e8884" stroke="#222" stroke-width="1.2"/>
<path d="M40 41q22 4 46 2l-2 6q-22 4-42 4q-4-2-2-12z" fill="#3c3a38"/>
<path d="M44 50q22 2 40-3" stroke="#2a1810" stroke-width="3" fill="none"/>
<path d="M46 47q18 1 34-2" stroke="#a8a09a" stroke-width="1" fill="none"/>
<rect x="80" y="44" width="4.5" height="23" fill="#1c140e"/>
<rect x="42" y="49" width="3.5" height="14" fill="#1c140e"/>
<path d="M90 24q9 8 7 24M86 48l7 11" stroke="#3a2a20" stroke-width="3" fill="none"/>
</g>
<rect width="102" height="67" filter="url(#nz2)" opacity="0.25"/>
</svg>
<svg class="a" style="left:272px;top:65px" width="100" height="67" viewBox="0 0 100 67">
<defs><filter id="bl3" x="-10%" y="-10%" width="120%" height="120%"><feGaussianBlur stdDeviation="0.5"/></filter><clipPath id="c3"><rect width="100" height="67"/></clipPath>
<filter id="nz3"><feTurbulence type="fractalNoise" baseFrequency="0.45" numOctaves="2" seed="7"/><feColorMatrix type="matrix" values="0 0 0 0 1  0 0 0 0 1  0 0 0 0 1  0 0 0 -2.2 1.25"/></filter>
<filter id="nz3b"><feTurbulence type="fractalNoise" baseFrequency="0.35" numOctaves="2" seed="3"/><feColorMatrix type="matrix" values="0 0 0 0 0  0 0 0 0 0  0 0 0 0 0  0 0 0 -2.5 1.3"/></filter></defs>
<rect width="100" height="67" fill="#b6c2da"/>
<g clip-path="url(#c3)">
<g filter="url(#bl3)">
<path d="M0 6h100v61h-100z" fill="#2e3852"/>
<path d="M56 7h44v4h-44z" fill="#7080a0"/>
<path d="M2 8q10-2 24-2v5q-12 2-24 2z" fill="#d8e0ee"/>
<path d="M0 12l10-4l15-2l10-2l10 2l7 6l6 8l7 6l8-2l9 4l8 8l10 4v37h-100z" fill="#54504c"/>
<path d="M64 26q10 2 16 10l20 6v25h-36z" fill="#3e3c3c"/>
<path d="M28 6l4 22M40 8l3 24M18 12l6 18M50 14l4 16" stroke="#3e3a38" stroke-width="1.6" fill="none"/>
<path d="M0 14q6-2 10-1" stroke="#e8eef8" stroke-width="2.5" fill="none"/>
<path d="M52 14q8 4 11 10l-5 4q-4-6-6-14z" fill="#dfe6f2"/>
<path d="M77 24q6 1 9 6l-3 3q-4-3-6-9z" fill="#cdd6e6"/>
<path d="M58 36q6 6 8 16l-5 3q-4-8-3-19z" fill="#e8eef6"/>
<path d="M70 38q4 4 6 10l-4 1q-2-5-2-11z" fill="#dde4ee"/>
<path d="M84 48q4 8 5 19h-3q-1-10-2-19z" fill="#d0d8e6"/>
<path d="M0 46q8-2 14-2l2 4q-8 2-16 4z" fill="#c8d2e2"/>
<path d="M0 56q20-8 37-10q12 6 22 21h-59z" fill="#eef3fb"/>
<path d="M0 61q10-2 18 0l-5 6h-13z" fill="#a8b8d8"/>
<rect x="19" y="39" width="5" height="6" rx="2" fill="#cc1e3a"/>
<rect x="21" y="44" width="2" height="5" fill="#8a8890"/>
</g>
<rect x="55" y="6" width="45" height="61" filter="url(#nz3)" opacity="0.2"/>
<rect x="0" y="6" width="60" height="42" filter="url(#nz3b)" opacity="0.25"/>
</g></svg>
  <div class="ln" style="top:139.5px"><b>Vancouver Island North</b> is a region of natural and cultural wealth.&nbsp; It’s where some of the world’s</div>
<div class="ln" style="top:148.5px;letter-spacing:-0.035px">greatest predators – cougars, wolves, bears and killer whales – maintain ecological balance in pristine</div>
<div class="ln" style="top:157.7px">waters and vast rainforests.&nbsp; It’s where First Nations people and their culture still thrive after 8,000</div>
<div class="ln" style="top:166.9px">years.&nbsp; You can see traditional big houses and the world’s tallest totem poles here, watch native</div>
<div class="ln" style="top:176.1px">carvers at work and weave a cedar bracelet at a First Nations cultural gallery. It’s where intrepid</div>
<div class="ln" style="top:185.3px">European settlers first began arriving in the 1800s, building fishing villages, clearing farmland and</div>
<div class="ln last" style="top:194.5px">seeking to fulfil utopian dreams.</div>
<div class="ln" style="top:213.0px">The spectacular <u>North Island</u> area, under the jurisdiction of the <u>Regional District of Mount</u></div>
<div class="ln" style="top:222.2px"><u>Waddington</u>, covers the northern third of Vancouver Island and large tracts of the adjacent mainland,</div>
<div class="ln" style="top:231.4px">where several remote luxury wilderness resorts can be reached by boat and floatplane. Eco-</div>
<div class="ln" style="top:240.6px">adventure in Vancouver Island’s wild North is like nowhere else in the world.&nbsp; You can kayak in</div>
<div class="ln" style="top:249.8px">waters abundant with sea life, including orcas and humpback whales, take a <u>grizzly bear viewing</u></div>
<div class="ln" style="top:259.0px">expedition to the Great Bear Rainforest, fish for record-breaking salmon, ski the Island’s deepest</div>
<div class="ln" style="top:268.2px">powder and hike the new North Coast Trail.&nbsp; Friendly communities – including Port Hardy, Port</div>
<div class="ln" style="top:277.4px">McNeill, Port Alice, Alert Bay and Telegraph Cove – offer cafes and bistros, shopping, museums and</div>
<div class="ln last" style="top:286.6px">art galleries, and accommodation from waterfront hotels and cozy B&amp;Bs to the latest in eco-lodging.</div>
<div class="ln last" style="top:305.1px"><b>Designation:</b> Forest Capital of British Columbia 2010</div>
<div class="ln" style="top:323.9px"><b>Population:</b>&nbsp; Approximately <u>12,000</u>. Largest communities:&nbsp; <u>Port Hardy</u> (3,800), <u>Port McNeill</u> (2,600)</div>
<div class="ln last" style="top:333.1px">and Cormorant Island, including <u>Alert Bay</u> (1,300).</div>
<div class="ln" style="top:352.0px"><b>Weather:</b>&nbsp; Vancouver Island North has a temperate coastal climate with a lush spring season that</div>
<div class="ln" style="top:361.2px;letter-spacing:-0.017px">comes as early as the end of February and mild, dry summers with average temperatures in the 17°C</div>
<div class="ln" style="top:370.2px">(63°F) range.&nbsp; Fall is crisp and cool, still ideal for outdoor activities, while winters are wet, but</div>
<div class="ln last" style="top:379.2px">moderate, with seasonal temperature averaging 4°C (39°F).</div>
<div class="ln" style="top:397.9px;letter-spacing:-0.054px"><b>Economic Drivers:</b>&nbsp; Fishing, logging and mining have been the traditional mainstays of the Vancouver</div>
<div class="ln" style="top:407.1px;letter-spacing:-0.013px">Island North economy. The region is among Canada’s largest timber producers and is home to one of</div>
<div class="ln" style="top:416.1px">only a few specialty cellulose mills in North America. Other major industries include commercial</div>
<div class="ln last" style="top:425.1px">fishing, aquaculture and tourism.</div>
  </div>
  <div class="a" style="left:2px;top:507.5px;font-size:6.85px;line-height:8px;color:#f06a6a;white-space:nowrap">Only. Created with SautinSoft.Pdf. Click for purchase.</div>
<div class="a" style="left:0;top:542px;width:508px;height:300px;border-top:1px solid #d9d9d9;border-right:1px solid #d9d9d9"></div>
<div class="a" style="left:0;top:548px;width:508px;text-align:center;font-size:8.5px;line-height:11px;color:#444">Salary</div>
<svg class="a" style="left:0;top:0" width="514" height="826" viewBox="257 133 514 826">
<path d="M510.5 843L510.50 698.50A144.5 144.5 0 0 1 654.21 858.10Z" fill="#4472c4" stroke="#fff" stroke-width="1.3"/>
<path d="M510.5 843L654.21 858.10A144.5 144.5 0 0 1 547.41 982.71Z" fill="#ed7d31" stroke="#fff" stroke-width="1.3"/>
<path d="M510.5 843L547.41 982.71A144.5 144.5 0 0 1 374.20 891.00Z" fill="#a5a5a5" stroke="#fff" stroke-width="1.3"/>
<path d="M510.5 843L374.20 891.00A144.5 144.5 0 0 1 510.50 698.50Z" fill="#ffc000" stroke="#fff" stroke-width="1.3"/>
</svg>
</div>
<div id="vscroll" class="a"><div class="a" style="left:8px;top:57px;width:2px;height:678px;background:#787878"></div><div class="a" style="left:0;top:825px;width:17px;height:15px;background:#f7f7f7"></div></div>
<div id="rstrip" class="a"><svg class="ico" style="left:5px;top:415px" width="7" height="11"><path d="M6.5 0v11l-6-5.5z" fill="#6e6e6e"/></svg></div>
<div id="rpanel" class="a">
<svg class="ico" style="left:12px;top:12px" width="24" height="24" viewBox="0 0 24 24"><circle cx="9.6" cy="9.3" r="7.4" fill="none" stroke="#6e6e6e" stroke-width="2.2"/><path d="M14.8 14.5l5.8 5.8" stroke="#6e6e6e" stroke-width="2.6"/><path d="M8.3 6.3v6l-3-3z M10.9 6.3v6l3-3z" fill="#6e6e6e"/></svg>
<div class="a" style="left:9px;top:46px;width:28px;height:1px;background:#c9c9c9"></div>
<svg class="ico" style="left:12px;top:58px" width="24" height="25" viewBox="0 0 24 25"><path d="M1.5 1.5h10.5l4.5 4.5v14.5h-15z" fill="#d2e7ea" stroke="#1e9299" stroke-width="2" stroke-linejoin="round"/><path d="M7.5 6.5c0.5 2-0.5 5-3 8M7.5 9.5c0.5 1.5 2 3 4 3.5" fill="none" stroke="#1e9299" stroke-width="0.9"/><circle cx="17" cy="17.5" r="6.2" fill="#1e9299" stroke="#fafafa" stroke-width="1"/><path d="M13.8 17.5h5.5M17 14.8l2.8 2.7l-2.8 2.7" fill="none" stroke="#fff" stroke-width="1.8"/></svg>
<svg class="ico" style="left:11px;top:104px" width="24" height="24" viewBox="0 0 24 24"><rect x="2" y="2" width="20.5" height="7.5" fill="#f2d3e6" stroke="#d6338c" stroke-width="2"/><rect x="2" y="13.5" width="9" height="9" fill="#f2d3e6" stroke="#d6338c" stroke-width="2"/><path d="M14.5 14.5h8M14.5 18h8M14.5 21.5h8" stroke="#d6338c" stroke-width="1.3"/></svg>
<svg class="ico" style="left:12px;top:150px" width="24" height="25" viewBox="0 0 24 25"><path d="M1.5 1.5h10.5l4.5 4.5v14.5h-15z" fill="#f6d9dc" stroke="#e34850" stroke-width="2" stroke-linejoin="round"/><path d="M7.5 6.5c0.5 2-0.5 5-3 8M7.5 9.5c0.5 1.5 2 3 4 3.5" fill="none" stroke="#e34850" stroke-width="0.9"/><circle cx="17" cy="17.5" r="6.2" fill="#e34850" stroke="#fafafa" stroke-width="1"/><path d="M17 14v7M13.5 17.5h7" stroke="#fff" stroke-width="2"/></svg>
<svg class="ico" style="left:12px;top:197px" width="22" height="23" viewBox="0 0 22 23"><path d="M2.5 1h16.5a1.5 1.5 0 0 1 1.5 1.5v12a1.5 1.5 0 0 1-1.5 1.5h-10l-3.2 4.5v-4.5h-3.3a1.5 1.5 0 0 1-1.5-1.5v-12a1.5 1.5 0 0 1 1.5-1.5z" fill="#d5ad1e"/><path d="M5 6.5h11.5M5 10.5h11.5" stroke="#fafafa" stroke-width="1.6"/></svg>
<svg class="ico" style="left:10px;top:241px" width="26" height="26" viewBox="0 0 26 26"><path d="M1.5 1.5h7.5l3.5 3.5v12h-11z" fill="#fafafa" stroke="#6b62e8" stroke-width="2" stroke-linejoin="round"/><path d="M6 6c0.4 1.7-0.4 4-2.3 6.5M6 8.5c0.4 1.2 1.6 2.4 3.2 2.8" fill="none" stroke="#6b62e8" stroke-width="0.9"/><path d="M13 1h7l4.5 4.5v11.5h-11.5z" fill="#6b62e8"/><path d="M20 1v4.5h4.5" fill="none" stroke="#fafafa" stroke-width="0.8"/><path d="M9.5 13v6h-3.5l5 5.5l5-5.5h-3.5v-6z" fill="#6b62e8" stroke="#fafafa" stroke-width="0.8"/></svg>
<svg class="ico" style="left:12px;top:289px" width="24" height="22" viewBox="0 0 24 22"><rect x="11" y="1.5" width="10" height="18.5" rx="1" fill="#d9ecc8" stroke="#76c83e" stroke-width="2"/><path d="M2 10v10h7M2 10h1.5M7 10h2" fill="none" stroke="#76c83e" stroke-width="2" stroke-dasharray="2.2 1.6"/><path d="M8.5 2l-6.5 0.2l0.2 6.5z" fill="#76c83e"/><path d="M3.5 3.5l5 5" stroke="#76c83e" stroke-width="2"/></svg>
<svg class="ico" style="left:11px;top:335px" width="25" height="22" viewBox="0 0 25 22"><path d="M5.5 1.5h10.5l3.5 3.5v15.5h-14z" fill="#d2e7ea" stroke="#1e9299" stroke-width="2" stroke-linejoin="round"/><path d="M12.5 6.5c0.5 2-0.5 5-3 8M12.5 9.5c0.5 1.5 2 3 4 3.5" fill="none" stroke="#1e9299" stroke-width="0.9"/><path d="M1 7l4 4l-4 4M24 7l-4 4l4 4" fill="none" stroke="#1e9299" stroke-width="2"/></svg>
<svg class="ico" style="left:11px;top:380px" width="24" height="24" viewBox="818 513 24 24"><path d="M819 534.2l5.5-6l3 3l-1 3z" fill="#d6338c"/><path d="M827.5 528h12.3a1.2 1.2 0 0 1 1.2 1.2v3.8a1.2 1.2 0 0 1-1.2 1.2h-12.3z" fill="#d6338c"/><g transform="rotate(-45 831 523.5)"><rect x="820.5" y="519.8" width="21" height="7.4" rx="2.2" fill="#d6338c"/><rect x="823.5" y="522.3" width="15" height="2.4" fill="#f3d3e5"/></g></svg>
<svg class="ico" style="left:14px;top:427px" width="19" height="23" viewBox="0 0 19 23"><path d="M1.5 1.5h10l5.5 5.5v14.5h-15.5z" fill="#f0d2ef" stroke="#c13bc3" stroke-width="2" stroke-linejoin="round"/><rect x="4.5" y="12" width="9.5" height="4" fill="#fafafa" stroke="#c13bc3" stroke-width="1.6"/><path d="M11.5 1.5v5.5h5.5" fill="none" stroke="#c13bc3" stroke-width="1.2"/></svg>
<svg class="ico" style="left:10px;top:470px" width="26" height="26" viewBox="817 603 26 26"><circle cx="828" cy="609.5" r="4.6" fill="#c13bc3"/><path d="M818 621.5c0.3-4 3-6.5 8-6.5c2.5 0 4 0.5 5 1.3l-3.5 5.2z" fill="#c13bc3"/><path d="M831.5 605.2a5 5 0 0 1 0.8 8.3" fill="none" stroke="#c13bc3" stroke-width="1.6"/><g transform="rotate(45 836 621)"><path d="M832.5 613.5h7l1 6.5l-4.5 9l-4.5-9z" fill="#fafafa" stroke="#c13bc3" stroke-width="1.8" stroke-linejoin="round"/><path d="M836 622v6" stroke="#c13bc3" stroke-width="1.1"/><circle cx="836" cy="621" r="1" fill="#c13bc3"/></g></svg>
<svg class="ico" style="left:10px;top:518px" width="26" height="24" viewBox="817 651 26 24"><g transform="rotate(-45 828 662)"><path d="M818 658.5h17.5a3.5 3.5 0 0 1 0 7h-17.5l-4-3.5z" fill="#e2d5f6" stroke="#8e57dc" stroke-width="2" stroke-linejoin="round"/></g><path d="M819 673.5h7" stroke="#8e57dc" stroke-width="2.2"/><path d="M828 672c1.2-2.5 2.5-3.5 2.5-0.5c0 1.8 1.3 1.5 2.2-0.6c0.3 2 1.3 2.3 2.2 1c1-1.3 1.8-1.5 2.6-0.2c0.7 0.9 1.3 0.9 2.2 0.1" fill="none" stroke="#8e57dc" stroke-width="1.9" stroke-linecap="round"/></svg>
<svg class="ico" style="left:11px;top:563px" width="24" height="26" viewBox="0 0 24 26"><path d="M1.5 1.5h9.5l5 5v15h-14.5z" fill="#f6eecb" stroke="#e1b60f" stroke-width="2" stroke-linejoin="round"/><path d="M11 1.5v5h5" fill="none" stroke="#e1b60f" stroke-width="1.2"/><path d="M10 13h12.5v9h-7l-2.5 3v-3h-3z" fill="#e1b60f" stroke="#fafafa" stroke-width="0.8"/><path d="M12.5 16.5h7.5M12.5 19h7.5" stroke="#fafafa" stroke-width="1.1"/></svg>
<svg class="ico" style="left:11px;top:610px" width="25" height="25" viewBox="0 0 25 25"><path d="M2.3 19.5l8.5-8.5a5.2 5.2 0 0 1 6.2-7.2l-3.2 3.2l1 2.5l2.5 1l3.2-3.2a5.2 5.2 0 0 1-7.2 6.2l-8.5 8.5a2 2 0 0 1-2.8-2.8z" fill="#6e6e6e"/><circle cx="18.5" cy="18.5" r="5.8" fill="#6e6e6e" stroke="#fafafa" stroke-width="1.2"/><path d="M18.5 15.2v6.6M15.2 18.5h6.6" stroke="#fafafa" stroke-width="2"/></svg>
<div class="a" style="left:9px;top:795px;width:28px;height:1px;background:#c9c9c9"></div>
<svg class="ico" style="left:17px;top:810px" width="17" height="18" viewBox="0 0 17 18"><rect x="1" y="0.5" width="2.4" height="16.5" rx="1" fill="#6e6e6e"/><path d="M6.5 8.7h7.5M11 5.2l3.6 3.5l-3.6 3.5" fill="none" stroke="#6e6e6e" stroke-width="2"/></svg>
</div>
<div id="status" class="a"><div class="a" style="left:0;top:0;width:112px;height:15px;background:#e1e1e1"></div><span class="a" style="left:20px;top:1px;font-size:11px;line-height:14px;color:#222;white-space:nowrap">8.50 x 11.00 in</span><div class="a" style="left:152px;top:8px;width:327px;height:2px;background:#787878"></div></div>
</body></html>
